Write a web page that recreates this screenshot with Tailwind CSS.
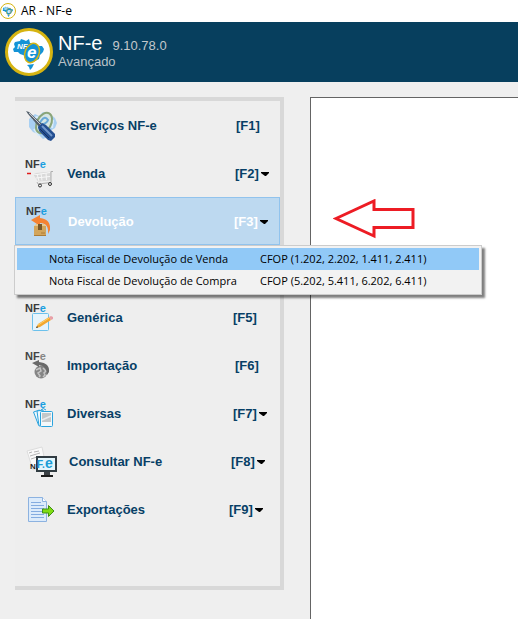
<!DOCTYPE html>
<html lang="pt-BR">

<head>
  <meta charset="UTF-8">
  <meta name="viewport" content="width=device-width, initial-scale=1.0">
  <title>AR - NF-e</title>
  <script src="https://cdn.jsdelivr.net/npm/@tailwindcss/browser@4"></script>
</head>

<body class="bg-[#efefef] min-h-screen flex flex-col font-['Liberation_Sans',Arial,sans-serif]">

  <!-- shared shapes -->
  <svg class="hidden" aria-hidden="true">
    <symbol id="logo" viewBox="0 0 48 48">
      <circle cx="24" cy="24" r="22.5" fill="#fff" stroke="#d6b411" stroke-width="3" />
      <path d="M10 14l5-1 1-2 3 1 2 1 3-2 1 4 5 0 2 3 5 0 2 3-1 3-3 3-1 4-4 2-5 2-2-2-1-4-4-2-3-1-2-2-4 0-1-3 2-2-1-3z" fill="#1593d6" />
      <path d="M22 37l7-1-2 4-2 2-1-3z" fill="#1593d6" />
      <text x="12" y="21" font-size="8" font-weight="bold" font-style="italic" fill="#fff">NF</text>
      <ellipse cx="27" cy="25" rx="7" ry="10" transform="rotate(22 27 25)" fill="#1593d6" stroke="#d6b411" stroke-width="1.500" />
      <text x="22" y="30" font-size="17" font-weight="bold" font-style="italic" fill="#fff">e</text>
    </symbol>
    <symbol id="nfe" viewBox="0 0 32 32">
      <text x="0" y="10" font-size="11" font-weight="bold" fill="#3a3a3a">NF<tspan fill="#1a9ee0">e</tspan></text>
    </symbol>
    <symbol id="caret" viewBox="0 0 8 4">
      <path d="M0 0h8v1L5 4H4L0 1z" fill="#000" />
    </symbol>
  </svg>

  <div class="h-[22px] bg-white flex items-center gap-[5px]">
    <svg class="size-4" aria-hidden="true"><use href="#logo" /></svg>
    <span class="font-['Open_Sans',sans-serif] text-[12px] leading-4 text-black">AR - NF-e</span>
  </div>

  <header class="h-[60px] bg-[#073f5e] flex items-center gap-[5px] pl-[5px]">
    <svg class="size-12" aria-hidden="true"><use href="#logo" /></svg>
    <div>
      <h1 class="flex items-baseline gap-[10px] text-[20px] leading-4 text-white">NF-e <span class="text-[13px] text-[#c3c8cb]">9.10.78.0</span></h1>
      <p class="text-[13px] leading-4 text-[#b9c2c7]">Avançado</p>
    </div>
  </header>

  <main class="flex-1 flex pt-[15px]">
    <nav class="relative w-[269px] h-[493px] ml-[15px] mr-[26px] shrink-0 bg-[#eeeeee] border-4 border-l-0 border-[#d8d8d8] text-[13px] font-bold text-[#073f66]">
      <ul>
        <li>
          <button type="button" class="w-full h-12 flex items-center gap-[10px] pt-0.5 pl-[10px] text-left">
            <svg class="w-[35px] h-8" viewBox="0 0 35 32" aria-hidden="true">
              <path d="M4 9l6-5 4 2 4-4 7 2 5 4 2 5-2 5-5 3-2 6-5 2-5-5-5-2-4-5z" fill="#a9d0f2" />
              <path d="M7 9l5-2 5 3M22 7l6 4-1 7M9 19l5 7" fill="none" stroke="#d9ecfb" stroke-width="2" />
              <ellipse cx="19" cy="13" rx="7" ry="11" transform="rotate(28 19 13)" fill="#d6e6e4" stroke="#8aa579" stroke-width="2" />
              <path d="M14 15q8-1 9-5-3-5-7 1t-1 8" fill="none" stroke="#69a9d8" stroke-width="2" />
              <path d="M1 1l3 1 14 13-3 3L3 4z" fill="#56616c" />
              <path d="M4 3l12 12" stroke="#c4cad0" stroke-width="1" />
              <path d="M13 17l4-4 4 2 9 9v3l-4 4-3-1-9-9z" fill="#244f91" />
              <path d="M17 16l10 10" stroke="#7399cd" stroke-width="2" />
              <path d="M15 19l9 9" stroke="#12305f" stroke-width="1" />
            </svg>
            <span class="w-[166px]">Serviços NF-e</span>
            <kbd class="font-[inherit] -ml-[10px]">[F1]</kbd>
          </button>
        </li>
        <li>
          <button type="button" aria-haspopup="menu" class="w-full h-12 flex items-center gap-[10px] pt-0.5 pl-[10px] text-left">
            <svg class="size-8" viewBox="0 0 32 32" aria-hidden="true">
              <use href="#nfe" />
              <path d="M2 15.500h4" stroke="#e01b1b" stroke-width="1.500" />
              <path d="M8 16l3-1 15-1.500v9l-13 1z" fill="#d9d9d9" />
              <path d="M8 16l4 .5 13-2M12 16l2 7M16 15.500l1 7M21 15l.5 7M11 20l14-1.500" fill="none" stroke="#f7f7f7" />
              <path d="M12 24l1 2 13-1.500v-11h2" fill="none" stroke="#b0b0b0" />
              <circle cx="15" cy="27.500" r="1.500" fill="#eee" stroke="#333" />
              <circle cx="25" cy="26" r="1.500" fill="#eee" stroke="#333" />
            </svg>
            <span class="w-42">Venda</span>
            <kbd class="font-[inherit] -ml-[10px]">[F2]</kbd>
            <svg class="w-2 h-1 -ml-2" aria-hidden="true"><use href="#caret" /></svg>
          </button>
        </li>
        <li>
          <button type="button" aria-haspopup="menu" aria-expanded="true" class="w-full h-12 flex items-center gap-[10px] pt-0.5 pl-[10px] text-left text-white bg-[#bdd9f0] outline outline-1 -outline-offset-1 outline-[#91c3ed]">
            <svg class="w-[33px] h-8" viewBox="0 0 33 32" aria-hidden="true">
              <use href="#nfe" width="32" height="32" x="1" y="-1" />
              <path d="M6 14l9-5v3q11 1 10 12l-2 4q1-11-8-11v3z" fill="#f58232" />
              <path d="M9 20h12v10H9z" fill="#d3a55b" />
              <path d="M9 20l2-2h8l2 2z" fill="#e9ca8c" />
              <path d="M13 18h4v6h-4z" fill="#76572a" />
              <path d="M9 29.500h12M16 27h4" stroke="#ad7c36" />
            </svg>
            <span class="w-[166px]">Devolução</span>
            <kbd class="font-[inherit] -ml-[10px]">[F3]</kbd>
            <svg class="w-2 h-1 -ml-2" aria-hidden="true"><use href="#caret" /></svg>
          </button>
          <div role="menu" class="absolute z-10 top-36 -left-px w-[468px] p-[2px] bg-[#f2f2f2] border border-[#cccccc] shadow-[3px_3px_2px_rgba(0,0,0,0.5)] font-['Open_Sans',sans-serif] text-[11px] font-normal text-black">
            <button type="button" role="menuitem" class="w-full h-[22px] pl-8 flex items-center bg-[#91c9f7]">
              <span class="w-[211px] text-left">Nota Fiscal de Devolução de Venda</span>
              <span>CFOP (1.202, 2.202, 1.411, 2.411)</span>
            </button>
            <button type="button" role="menuitem" class="w-full h-[22px] pl-8 flex items-center">
              <span class="w-[211px] text-left">Nota Fiscal de Devolução de Compra</span>
              <span>CFOP (5.202, 5.411, 6.202, 6.411)</span>
            </button>
          </div>
        </li>
        <li class="mt-12">
          <button type="button" class="w-full h-12 flex items-center gap-[10px] pt-0.5 pl-[10px] text-left">
            <svg class="size-8" viewBox="0 0 32 32" aria-hidden="true">
              <use href="#nfe" />
              <rect x="7.500" y="11.500" width="16" height="17" rx="1" fill="#e6f4fc" stroke="#6cc1ec" />
              <path d="M11 26l2-4 11-7 2 3-11 7z" fill="#f3a72e" />
              <path d="M13 23l11-7" stroke="#ffd16b" />
              <path d="M24 15l2-1 2 1v2l-2 1z" fill="#e8a0a8" />
              <path d="M11 26l1-2 1 1.500z" fill="#333" />
            </svg>
            <span class="w-[166px]">Genérica</span>
            <kbd class="font-[inherit] -ml-[10px]">[F5]</kbd>
          </button>
        </li>
        <li>
          <button type="button" class="w-full h-12 flex items-center gap-[10px] pt-0.5 pl-[10px] text-left">
            <svg class="size-8" viewBox="0 0 32 32" aria-hidden="true">
              <text x="0" y="10" font-size="11" font-weight="bold" fill="#444">NF<tspan fill="#858585">e</tspan></text>
              <circle cx="16" cy="22" r="6.500" fill="#858585" />
              <path d="M11 20l4-2 1 3-3 2 2 3-1 1M18 18l3 3-2 2 1 2-2 2" fill="none" stroke="#c5c5c5" stroke-width="1.500" />
              <path d="M7 13l7-3v2q11 1 10 10l-2 3q0-9-8-10v2z" fill="#696969" />
            </svg>
            <span class="w-42">Importação</span>
            <kbd class="font-[inherit] -ml-[10px]">[F6]</kbd>
          </button>
        </li>
        <li>
          <button type="button" aria-haspopup="menu" class="w-full h-12 flex items-center gap-[10px] pt-0.5 pl-[10px] text-left">
            <svg class="size-8" viewBox="0 0 32 32" aria-hidden="true">
              <use href="#nfe" />
              <path d="M8.500 14l6-2 4 14-5 1z" fill="#eef8fd" stroke="#2aa3de" />
              <path d="M12 13l6-1 2 15-6 1z" fill="#eef8fd" stroke="#2aa3de" />
              <rect x="15.500" y="13.500" width="12" height="15" rx="1" fill="#f3f8fa" stroke="#2aa3de" />
              <path d="M17 15h9v9h-9z" fill="#c3c7c9" />
              <path d="M17 22l9-4" stroke="#e9ecee" stroke-width="1.500" />
              <path d="M16 12q2-3 5 0" fill="none" stroke="#2aa3de" />
            </svg>
            <span class="w-[166px]">Diversas</span>
            <kbd class="font-[inherit] -ml-[10px]">[F7]</kbd>
            <svg class="w-2 h-1 -ml-2" aria-hidden="true"><use href="#caret" /></svg>
          </button>
        </li>
        <li>
          <button type="button" aria-haspopup="menu" class="w-full h-12 flex items-center gap-[10px] pt-0.5 pl-[10px] text-left">
            <svg class="w-[34px] h-8" viewBox="0 0 34 32" aria-hidden="true">
              <path d="M2 5l15-4 4 19-13 4z" fill="#fafafa" stroke="#dddddd" />
              <path d="M4 7l3-1M9 6l5-1M5 10l10-3M6 13l6-2" stroke="#b5b5b5" />
              <text x="5" y="23" font-size="8" font-weight="bold" fill="#222">N</text>
              <rect x="12" y="11" width="19" height="14" fill="#e4f5fc" stroke="#313c42" stroke-width="2" />
              <text x="12" y="22" font-size="10" font-weight="bold" fill="#1a9ed8">F.</text>
              <text x="20" y="22" font-size="14" font-weight="bold" fill="#1a9ed8">e</text>
              <path d="M19 26h6v3h-6z" fill="#3c4145" />
              <path d="M16 30h12" stroke="#1d1d1d" stroke-width="2" />
            </svg>
            <span class="w-[162px]">Consultar NF-e</span>
            <kbd class="font-[inherit] -ml-[10px]">[F8]</kbd>
            <svg class="w-2 h-1 -ml-2" aria-hidden="true"><use href="#caret" /></svg>
          </button>
        </li>
        <li>
          <button type="button" aria-haspopup="menu" class="w-full h-12 flex items-center gap-[10px] pt-0.5 pl-[10px] text-left">
            <svg class="size-8" viewBox="0 0 32 32" aria-hidden="true">
              <path d="M3.500 3.500h14l4 4v20h-18z" fill="#dcebfb" stroke="#8cb2e0" />
              <path d="M17.500 3.500v4h4" fill="#fff" stroke="#8cb2e0" />
              <path d="M6 8.500h10M6 11.500h13M6 14.500h13M6 17.500h13M6 20.500h13M6 23.500h13" stroke="#84ace0" />
              <path d="M17.500 15h6v-3.500l5.500 5.500-5.500 5.500V19h-6z" fill="#7fdc14" stroke="#3f8f16" />
            </svg>
            <span class="w-[162px]">Exportações</span>
            <kbd class="font-[inherit] -ml-[10px]">[F9]</kbd>
            <svg class="w-2 h-1 -ml-2" aria-hidden="true"><use href="#caret" /></svg>
          </button>
        </li>
      </ul>
    </nav>

    <section class="flex-1 bg-white border-t border-l border-[#646464] pt-[101px] pl-[22px]">
      <svg class="w-[82px] h-10" viewBox="0 0 82 40" aria-hidden="true">
        <path d="M3 19.500L41 2v8.500h39v18H41V37z" fill="none" stroke="#ed1c24" stroke-width="3" />
      </svg>
    </section>
  </main>
</body>

</html>
